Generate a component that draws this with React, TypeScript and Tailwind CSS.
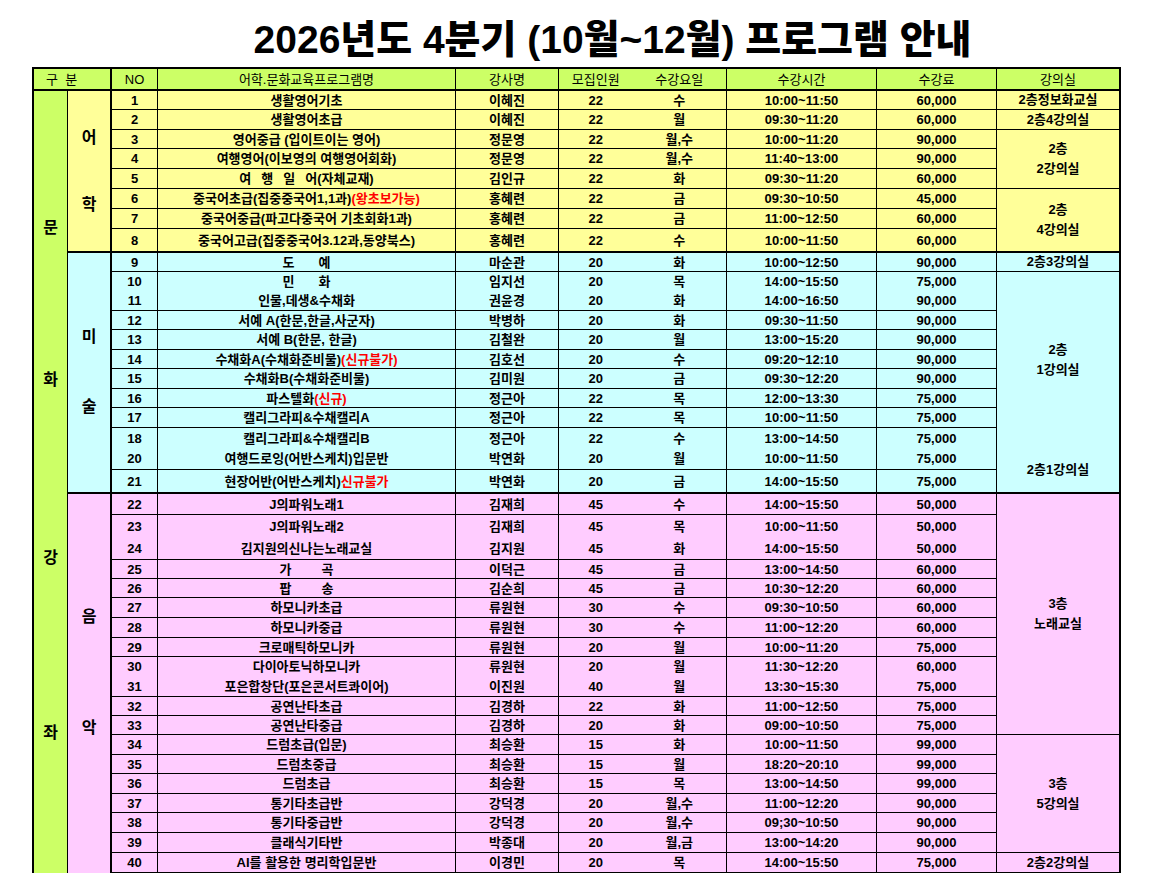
import { Fragment, type ReactNode } from "react";

type Row = {
  no: number;
  name: ReactNode;
  t: string;
  n: string;
  d: string;
  time: string;
  fee: string;
  b?: "none" | "thick";
};

function Red({ children }: { children: ReactNode }) {
  return <span className="text-[#ff0000]">{children}</span>;
}

const rows: Row[] = [
  { no: 1, name: "생활영어기초", t: "이혜진", n: "22", d: "수", time: "10:00~11:50", fee: "60,000" },
  { no: 2, name: "생활영어초급", t: "이혜진", n: "22", d: "월", time: "09:30~11:20", fee: "60,000" },
  { no: 3, name: "영어중급 (입이트이는 영어)", t: "정문영", n: "22", d: "월,수", time: "10:00~11:20", fee: "90,000" },
  { no: 4, name: "여행영어(이보영의 여행영어회화)", t: "정문영", n: "22", d: "월,수", time: "11:40~13:00", fee: "90,000" },
  {
    no: 5,
    name: (
      <span className="flex gap-[10px]">
        <span>여</span>
        <span>행</span>
        <span>일</span>
        <span>어(자체교재)</span>
      </span>
    ),
    t: "김인규",
    n: "22",
    d: "화",
    time: "09:30~11:20",
    fee: "60,000",
  },
  {
    no: 6,
    name: (
      <>
        중국어초급(집중중국어1,1과)<Red>(왕초보가능)</Red>
      </>
    ),
    t: "홍혜련",
    n: "22",
    d: "금",
    time: "09:30~10:50",
    fee: "45,000",
  },
  { no: 7, name: "중국어중급(파고다중국어 기초회화1과)", t: "홍혜련", n: "22", d: "금", time: "11:00~12:50", fee: "60,000" },
  { no: 8, name: "중국어고급(집중중국어3.12과,동양북스)", t: "홍혜련", n: "22", d: "수", time: "10:00~11:50", fee: "60,000", b: "thick" },
  {
    no: 9,
    name: (
      <span className="flex gap-[24px]">
        <span>도</span>
        <span>예</span>
      </span>
    ),
    t: "마순관",
    n: "20",
    d: "화",
    time: "10:00~12:50",
    fee: "90,000",
  },
  {
    no: 10,
    name: (
      <span className="flex gap-[24px]">
        <span>민</span>
        <span>화</span>
      </span>
    ),
    t: "임지선",
    n: "20",
    d: "목",
    time: "14:00~15:50",
    fee: "75,000",
    b: "none",
  },
  { no: 11, name: "인물,데생&수채화", t: "권윤경", n: "20", d: "화", time: "14:00~16:50", fee: "90,000" },
  { no: 12, name: "서예 A(한문,한글,사군자)", t: "박병하", n: "20", d: "화", time: "09:30~11:50", fee: "90,000" },
  { no: 13, name: "서예 B(한문, 한글)", t: "김철완", n: "20", d: "월", time: "13:00~15:20", fee: "90,000" },
  {
    no: 14,
    name: (
      <>
        수채화A(수채화준비물)<Red>(신규불가)</Red>
      </>
    ),
    t: "김호선",
    n: "20",
    d: "수",
    time: "09:20~12:10",
    fee: "90,000",
  },
  { no: 15, name: "수채화B(수채화준비물)", t: "김미원", n: "20", d: "금", time: "09:30~12:20", fee: "90,000" },
  {
    no: 16,
    name: (
      <>
        파스텔화<Red>(신규)</Red>
      </>
    ),
    t: "정근아",
    n: "22",
    d: "목",
    time: "12:00~13:30",
    fee: "75,000",
  },
  { no: 17, name: "캘리그라피&수채캘리A", t: "정근아", n: "22", d: "목", time: "10:00~11:50", fee: "75,000" },
  { no: 18, name: "캘리그라피&수채캘리B", t: "정근아", n: "22", d: "수", time: "13:00~14:50", fee: "75,000", b: "none" },
  { no: 20, name: "여행드로잉(어반스케치)입문반", t: "박연화", n: "20", d: "월", time: "10:00~11:50", fee: "75,000" },
  {
    no: 21,
    name: (
      <>
        현장어반(어반스케치)<Red>신규불가</Red>
      </>
    ),
    t: "박연화",
    n: "20",
    d: "금",
    time: "14:00~15:50",
    fee: "75,000",
    b: "thick",
  },
  { no: 22, name: "J의파워노래1", t: "김재희", n: "45", d: "수", time: "14:00~15:50", fee: "50,000" },
  { no: 23, name: "J의파워노래2", t: "김재희", n: "45", d: "목", time: "10:00~11:50", fee: "50,000", b: "none" },
  { no: 24, name: "김지원의신나는노래교실", t: "김지원", n: "45", d: "화", time: "14:00~15:50", fee: "50,000" },
  {
    no: 25,
    name: (
      <span className="flex gap-[30px]">
        <span>가</span>
        <span>곡</span>
      </span>
    ),
    t: "이덕근",
    n: "45",
    d: "금",
    time: "13:00~14:50",
    fee: "60,000",
  },
  {
    no: 26,
    name: (
      <span className="flex gap-[30px]">
        <span>팝</span>
        <span>송</span>
      </span>
    ),
    t: "김순희",
    n: "45",
    d: "금",
    time: "10:30~12:20",
    fee: "60,000",
  },
  { no: 27, name: "하모니카초급", t: "류원현", n: "30", d: "수", time: "09:30~10:50", fee: "60,000" },
  { no: 28, name: "하모니카중급", t: "류원현", n: "30", d: "수", time: "11:00~12:20", fee: "60,000" },
  { no: 29, name: "크로매틱하모니카", t: "류원현", n: "20", d: "월", time: "10:00~11:20", fee: "75,000" },
  { no: 30, name: "다이아토닉하모니카", t: "류원현", n: "20", d: "월", time: "11:30~12:20", fee: "60,000", b: "none" },
  { no: 31, name: "포은합창단(포은콘서트콰이어)", t: "이진원", n: "40", d: "월", time: "13:30~15:30", fee: "75,000" },
  { no: 32, name: "공연난타초급", t: "김경하", n: "22", d: "화", time: "11:00~12:50", fee: "75,000" },
  { no: 33, name: "공연난타중급", t: "김경하", n: "20", d: "화", time: "09:00~10:50", fee: "75,000" },
  { no: 34, name: "드럼초급(입문)", t: "최승환", n: "15", d: "화", time: "10:00~11:50", fee: "99,000" },
  { no: 35, name: "드럼초중급", t: "최승환", n: "15", d: "월", time: "18:20~20:10", fee: "99,000" },
  { no: 36, name: "드럼초급", t: "최승환", n: "15", d: "목", time: "13:00~14:50", fee: "99,000" },
  { no: 37, name: "통기타초급반", t: "강덕경", n: "20", d: "월,수", time: "11:00~12:20", fee: "90,000" },
  { no: 38, name: "통기타중급반", t: "강덕경", n: "20", d: "월,수", time: "09;30~10:50", fee: "90,000" },
  { no: 39, name: "클래식기타반", t: "박종대", n: "20", d: "월,금", time: "13:00~14:20", fee: "90,000" },
  { no: 40, name: "AI를 활용한 명리학입문반", t: "이경민", n: "20", d: "목", time: "14:00~15:50", fee: "75,000" },
];

const head = "flex items-center justify-center border-r border-b-2 border-black bg-[#ccff66] font-normal";
const roomBase = "col-start-9 flex items-center justify-center text-center leading-[20px] border-r-2 border-black";

export default function App() {
  return (
    <div className="w-[1157px] h-[876px] overflow-hidden bg-white text-black font-['Liberation_Sans','Noto_Sans_CJK_KR',sans-serif]">
      <div className="h-[67px] pt-[18px] pl-[68px] flex justify-center">
        <h1 className="text-[39px] leading-[44px] font-black">
          2026년도 4분기 (10월~12월) 프로그램 안내
        </h1>
      </div>

      <div className="ml-[32px] w-[1089px] border-l-2 border-t-2 border-black grid grid-cols-[34px_44px_46px_298px_103px_168px_150px_120px_124px] grid-rows-[22px_19px_20px_19px_20px_20px_20px_20px_24px_19px_19px_20px_19px_20px_19px_20px_19px_20px_20px_22px_24px_21px_22px_23px_19px_19px_20px_20px_19px_19px_21px_19px_19px_20px_19px_20px_19px_20px_20px_20px] text-[13px] leading-none font-bold">
        {/* header */}
        <div className="col-span-2 flex items-center pl-[12px] border-r-2 border-b-2 border-black bg-[#ccff66] font-normal whitespace-pre">
          구  분
        </div>
        <div className={head}>NO</div>
        <div className={head}>어학.문화교육프로그램명</div>
        <div className={head}>강사명</div>
        <div className="flex items-center border-r border-b-2 border-black bg-[#ccff66] font-normal">
          <span className="w-[74px] text-center">모집인원</span>
          <span className="w-[94px] text-center">수강요일</span>
        </div>
        <div className={head}>수강시간</div>
        <div className={head}>수강료</div>
        <div className="flex items-center justify-center border-r-2 border-b-2 border-black bg-[#ccff66] font-normal">
          강의실
        </div>

        {/* 구분 */}
        <div className="col-start-1 row-start-2 row-span-39 flex flex-col items-center border-r border-black bg-[#ccff66] text-[16px] leading-[20px]">
          <span className="mt-[127px]">문</span>
          <span className="mt-[132px]">화</span>
          <span className="mt-[158px]">강</span>
          <span className="mt-[155px]">좌</span>
        </div>
        <div className="col-start-2 row-start-2 row-span-8 flex flex-col items-center border-r-2 border-b-2 border-black bg-[#ffff99] text-[16px] leading-[20px]">
          <span className="mt-[37px]">어</span>
          <span className="mt-[47px]">학</span>
        </div>
        <div className="col-start-2 row-start-10 row-span-12 flex flex-col items-center border-r-2 border-b-2 border-black bg-[#ccffff] text-[16px] leading-[20px]">
          <span className="mt-[74px]">미</span>
          <span className="mt-[50px]">술</span>
        </div>
        <div className="col-start-2 row-start-22 row-span-19 flex flex-col items-center border-r-2 border-black bg-[#ffccff] text-[16px] leading-[20px]">
          <span className="mt-[113px]">음</span>
          <span className="mt-[91px]">악</span>
        </div>

        {/* 강의실 */}
        <div className={`${roomBase} row-start-2 border-b bg-[#ffff99]`}>2층정보화교실</div>
        <div className={`${roomBase} row-start-3 border-b bg-[#ffff99]`}>2층4강의실</div>
        <div className={`${roomBase} row-start-4 row-span-3 border-b bg-[#ffff99]`}>
          2층
          <br />
          2강의실
        </div>
        <div className={`${roomBase} row-start-7 row-span-3 border-b-2 bg-[#ffff99]`}>
          2층
          <br />
          4강의실
        </div>
        <div className={`${roomBase} row-start-10 border-b bg-[#ccffff]`}>2층3강의실</div>
        <div className={`${roomBase} row-start-11 row-span-9 bg-[#ccffff]`}>
          2층
          <br />
          1강의실
        </div>
        <div className={`${roomBase} row-start-20 row-span-2 border-b-2 bg-[#ccffff]`}>2층1강의실</div>
        <div className={`${roomBase} row-start-22 row-span-12 border-b bg-[#ffccff]`}>
          3층
          <br />
          노래교실
        </div>
        <div className={`${roomBase} row-start-34 row-span-6 border-b bg-[#ffccff]`}>
          3층
          <br />
          5강의실
        </div>
        <div className={`${roomBase} row-start-40 border-b bg-[#ffccff]`}>2층2강의실</div>

        {/* rows */}
        {rows.map((r) => {
          const bg = r.no <= 8 ? "bg-[#ffff99]" : r.no <= 21 ? "bg-[#ccffff]" : "bg-[#ffccff]";
          const bb = r.b === "none" ? "border-b-0" : r.b === "thick" ? "border-b-2" : "border-b";
          const c = `flex items-center justify-center border-r border-black ${bb} ${bg}`;
          return (
            <Fragment key={r.no}>
              <div className={c}>{r.no}</div>
              <div className={`${c} whitespace-pre`}>{r.name}</div>
              <div className={c}>{r.t}</div>
              <div className={`flex items-center border-r border-black ${bb} ${bg}`}>
                <span className="w-[74px] text-center">{r.n}</span>
                <span className="w-[94px] text-center">{r.d}</span>
              </div>
              <div className={c}>{r.time}</div>
              <div className={c}>{r.fee}</div>
            </Fragment>
          );
        })}
      </div>
    </div>
  );
}
